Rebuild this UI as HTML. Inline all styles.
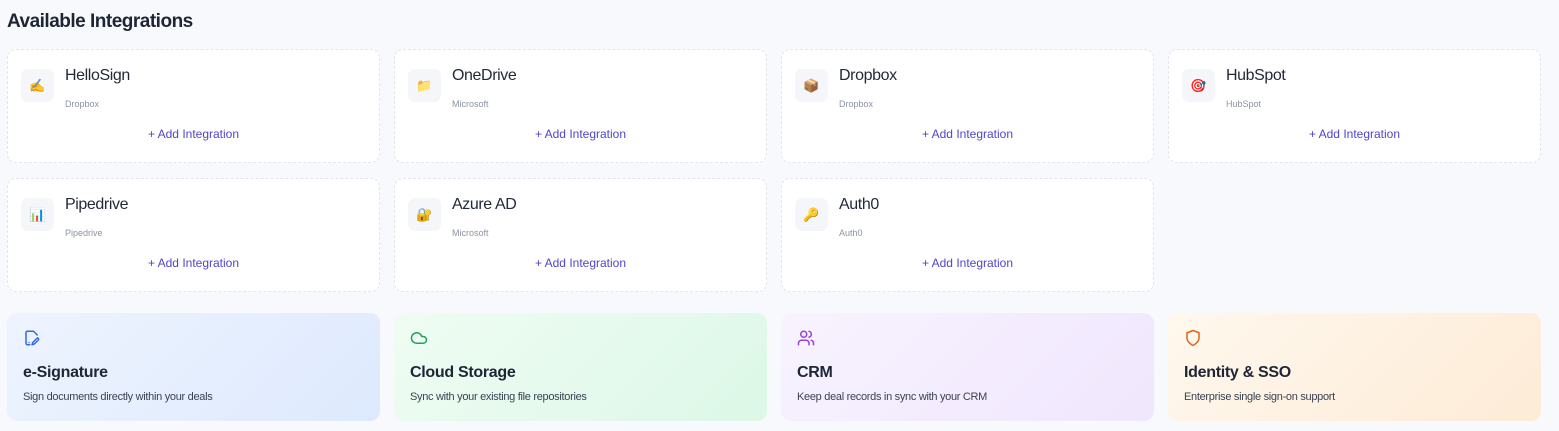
<!DOCTYPE html>
<html><head><style>
*{box-sizing:border-box;margin:0;padding:0}
body{width:1559px;height:431px;background:#f8f9fc;font-family:"Liberation Sans","Noto Sans CJK SC",sans-serif;position:relative;overflow:hidden}
h1{position:absolute;left:7px;top:11px;font-size:19px;font-weight:bold;color:#1e2535;letter-spacing:-0.5px}
.c{position:absolute;width:373px;height:114px;background:#fff;border:1px dashed #e1e5ee;border-radius:9px}
.ic{position:absolute;left:13px;top:19px;width:33px;height:33px;background:#f5f6f9;border-radius:7px;font-size:13px;display:flex;align-items:center;justify-content:center}
.t{position:absolute;left:57px;top:17px;font-size:16px;color:#222a38;letter-spacing:-0.4px}
.s{position:absolute;left:57px;top:49px;font-size:9px;color:#8b93a3}
.a{position:absolute;left:0;right:0;top:77px;text-align:center;font-size:12px;color:#4f46c8}
.b{position:absolute;top:313px;width:373px;height:108px;border-radius:10px}
.b svg{position:absolute;left:16px;top:16px}
.b .bt{position:absolute;left:16px;top:51px;font-size:16px;font-weight:bold;color:#1e2535;letter-spacing:-0.3px}
.b .bd{position:absolute;left:16px;top:78px;font-size:11px;color:#3a4252;letter-spacing:-0.3px}
</style></head><body>
<h1>Available Integrations</h1>

<div class="c" style="left:7px;top:49px"><div class="ic">✍️</div><div class="t">HelloSign</div><div class="s">Dropbox</div><div class="a">+ Add Integration</div></div>
<div class="c" style="left:394px;top:49px"><div class="ic">📁</div><div class="t">OneDrive</div><div class="s">Microsoft</div><div class="a">+ Add Integration</div></div>
<div class="c" style="left:781px;top:49px"><div class="ic">📦</div><div class="t">Dropbox</div><div class="s">Dropbox</div><div class="a">+ Add Integration</div></div>
<div class="c" style="left:1168px;top:49px"><div class="ic">🎯</div><div class="t">HubSpot</div><div class="s">HubSpot</div><div class="a">+ Add Integration</div></div>
<div class="c" style="left:7px;top:178px"><div class="ic">📊</div><div class="t">Pipedrive</div><div class="s">Pipedrive</div><div class="a">+ Add Integration</div></div>
<div class="c" style="left:394px;top:178px"><div class="ic">🔐</div><div class="t">Azure AD</div><div class="s">Microsoft</div><div class="a">+ Add Integration</div></div>
<div class="c" style="left:781px;top:178px"><div class="ic">🔑</div><div class="t">Auth0</div><div class="s">Auth0</div><div class="a">+ Add Integration</div></div>

<div class="b" style="left:7px;background:linear-gradient(135deg,#eef4ff,#dde9fd)">
<svg width="18" height="18" viewBox="0 0 24 24" fill="none" stroke="#2f6de0" stroke-width="2" stroke-linecap="round" stroke-linejoin="round"><path d="M14 3H6a2 2 0 0 0-2 2v14a2 2 0 0 0 2 2h3"/><path d="M14 3l5 5"/><path d="M19 12l-6 6-1 3 3-1 6-6a2 2 0 0 0-2-2z"/><path d="M8 18h.01"/></svg>
<div class="bt">e-Signature</div><div class="bd">Sign documents directly within your deals</div></div>
<div class="b" style="left:394px;background:linear-gradient(135deg,#effcf3,#dcf8e7)">
<svg width="18" height="18" viewBox="0 0 24 24" fill="none" stroke="#22a05a" stroke-width="2" stroke-linecap="round" stroke-linejoin="round"><path d="M17.5 19H9a7 7 0 1 1 6.7-9h1.8a4.5 4.5 0 1 1 0 9z"/></svg>
<div class="bt">Cloud Storage</div><div class="bd">Sync with your existing file repositories</div></div>
<div class="b" style="left:781px;background:linear-gradient(135deg,#f8f3ff,#f0e6fd)">
<svg width="18" height="18" viewBox="0 0 24 24" fill="none" stroke="#9a3fe0" stroke-width="2" stroke-linecap="round" stroke-linejoin="round"><path d="M16 21v-2a4 4 0 0 0-4-4H6a4 4 0 0 0-4 4v2"/><circle cx="9" cy="7" r="4"/><path d="M22 21v-2a4 4 0 0 0-3-3.9"/><path d="M16 3.1a4 4 0 0 1 0 7.8"/></svg>
<div class="bt">CRM</div><div class="bd">Keep deal records in sync with your CRM</div></div>
<div class="b" style="left:1168px;background:linear-gradient(135deg,#fff8ee,#fdebd6)">
<svg width="18" height="18" viewBox="0 0 24 24" fill="none" stroke="#e0661c" stroke-width="2" stroke-linecap="round" stroke-linejoin="round"><path d="M12 22s8-4 8-10V5l-8-3-8 3v7c0 6 8 10 8 10z"/></svg>
<div class="bt">Identity &amp; SSO</div><div class="bd">Enterprise single sign-on support</div></div>
</body></html>
